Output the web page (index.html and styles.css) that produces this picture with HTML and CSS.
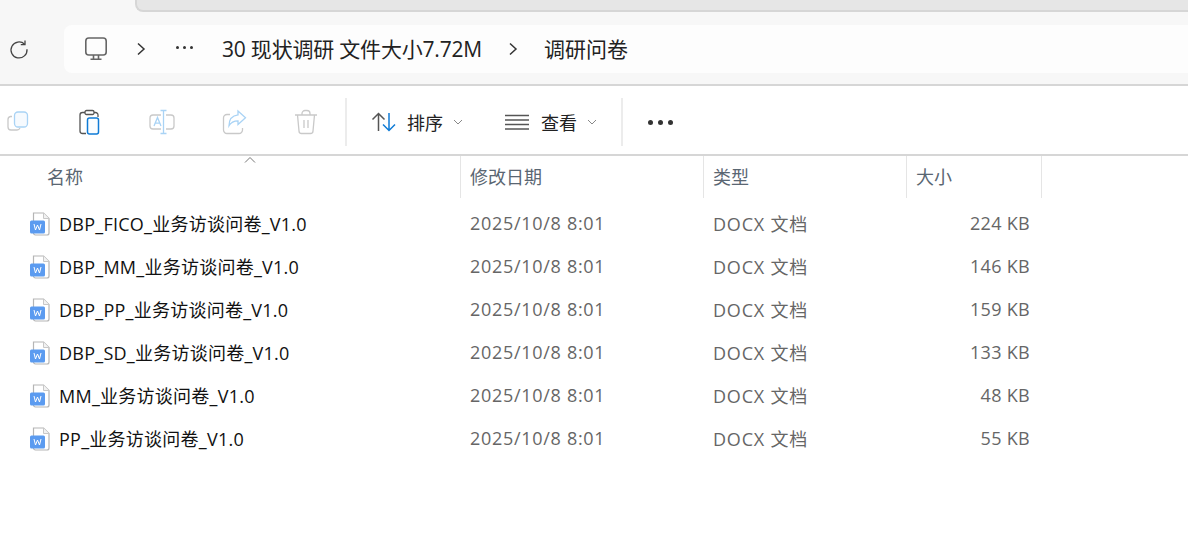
FILE: index.html
```html
<!DOCTYPE html>
<html lang="zh-CN">
<head>
    <meta charset="UTF-8">
    <title>调研问卷</title>
    <link rel="stylesheet" href="styles.css">
</head>
<body>
    <div class="tabstrip">
        <div class="tabstrip-fill"></div>
    </div>

    <div class="navbar">
        <button class="nav-btn">
            <svg width="22" height="22" viewBox="0 0 22 22" fill="none" stroke="#444" stroke-width="1.3"><path d="M16.6 6.2A8 8 0 1 0 19 11.2"/><path d="M17 2.4v4.2h-4.2"/></svg>
        </button>
        <div class="address">
            <svg class="pc-icon" width="24" height="24" viewBox="0 0 24 24" fill="none" stroke="#666" stroke-width="1.6"><rect x="1.8" y="1" width="20.4" height="17" rx="3"/><path d="M9.5 18v4M14.5 18v4M6.5 22.3h11"/></svg>
            <svg class="chev chev-1" width="10" height="14" viewBox="0 0 10 14" fill="none" stroke="#333" stroke-width="1.5"><path d="M2 1.5 8 7l-6 5.5"/></svg>
            <span class="more-dots"><i></i><i></i><i></i></span>
            <span class="crumb crumb-1">30 现状调研 文件大小7.72M</span>
            <svg class="chev chev-2" width="10" height="14" viewBox="0 0 10 14" fill="none" stroke="#333" stroke-width="1.5"><path d="M2 1.5 8 7l-6 5.5"/></svg>
            <span class="crumb crumb-2">调研问卷</span>
        </div>
    </div>

    <div class="toolbar">
        <div class="tool-group">
            <span class="tool">
                <svg width="24" height="24" viewBox="0 0 24 24" fill="none" stroke-width="1.3"><path d="M6 6.500H4.500A3 3 0 0 0 2 9.500v7.500a3 3 0 0 0 3 3h6a3.500 3.500 0 0 0 3-2" stroke="#c9c9c9"/><rect x="8.500" y="2" width="13" height="15" rx="3.500" stroke="#a9d3f5" fill="#f6fafe"/></svg>
            </span>
            <span class="tool">
                <svg width="26" height="26" viewBox="0 0 26 26" fill="none" stroke-width="1.3"><path d="M8 3.500H5.500A2.500 2.500 0 0 0 3 6v16a2.500 2.500 0 0 0 2.500 2.500H9M17 3.500h1.500A2.500 2.500 0 0 1 21 6v2" stroke="#555"/><rect x="8" y="1.500" width="9" height="4" rx="1.500" stroke="#555"/><rect x="10.500" y="9" width="11" height="16" rx="2" stroke="#0f7bd6" stroke-width="1.500" fill="#fafdff"/></svg>
            </span>
            <span class="tool">
                <svg width="26" height="26" viewBox="0 0 26 26" fill="none" stroke-width="1.300"><path d="M12 6H4a3 3 0 0 0-3 3v8a3 3 0 0 0 3 3h8M17 6h5a3 3 0 0 1 3 3v8a3 3 0 0 1-3 3h-5" stroke="#c9c9c9"/><path d="M14.500 2v22M11.500 1.500h6M11.500 24.500h6M5 17l3.500-8.500 3.500 8.500M6.200 14.200h4.600" stroke="#a9d3f5"/></svg>
            </span>
            <span class="tool">
                <svg width="26" height="26" viewBox="0 0 26 26" fill="none" stroke-width="1.300"><path d="M9 5.500H6a3.500 3.500 0 0 0-3.500 3.500v12A3.500 3.500 0 0 0 6 24.500h12a3.500 3.500 0 0 0 3.500-3.500v-2" stroke="#c9c9c9"/><path d="M17 2l7.500 6.800-7.500 6.800v-3.800c-4.200 0-7 1.400-9 5 0-6 3-10.300 9-11z" stroke="#a9d3f5"/></svg>
            </span>
            <span class="tool">
                <svg width="24" height="26" viewBox="0 0 24 26" fill="none" stroke="#c9c9c9" stroke-width="1.300"><path d="M1 6h22M8 6V4.500a3 3 0 0 1 3-3h2a3 3 0 0 1 3 3V6M3.500 6l1.500 16a2.500 2.500 0 0 0 2.500 2.500h9A2.500 2.500 0 0 0 19 22l1.500-16M10 11v8M14 11v8"/></svg>
            </span>
        </div>
        <div class="divider"></div>
        <div class="menu-btn menu-sort">
            <svg width="26" height="22" viewBox="0 0 26 22" fill="none" stroke-width="1.500"><path d="M7.500 20V2.500M1.500 8.500l6-6 6 6" stroke="#555"/><path d="M18 2v17.500M12 13.500l6 6 6-6" stroke="#0f7bd6"/></svg>
            <span>排序</span>
            <svg class="caret" width="10" height="6" viewBox="0 0 10 6" fill="none" stroke="#888" stroke-width="1"><path d="M1 1l4 4 4-4"/></svg>
        </div>
        <div class="menu-btn menu-view">
            <svg width="24" height="16" viewBox="0 0 24 16" fill="none" stroke="#555" stroke-width="1.300"><path d="M0 1.500h24M0 6h24M0 10.500h24M0 15h24"/></svg>
            <span>查看</span>
            <svg class="caret" width="10" height="6" viewBox="0 0 10 6" fill="none" stroke="#888" stroke-width="1"><path d="M1 1l4 4 4-4"/></svg>
        </div>
        <div class="divider"></div>
        <span class="toolbar-more"><i></i><i></i><i></i></span>
    </div>

    <div class="list">
        <div class="list-head">
            <div class="col-head col-name">名称
                <svg class="sort-arrow" width="12" height="6" viewBox="0 0 12 6" fill="none" stroke="#777"><path d="M1 5.500l5-5 5 5"/></svg>
            </div>
            <div class="col-head">修改日期</div>
            <div class="col-head">类型</div>
            <div class="col-head">大小</div>
        </div>

        <div class="row">
            <div class="cell-name"><svg class="doc" width="20" height="24" viewBox="0 0 20 24"><use href="#docx"/></svg>DBP_FICO_业务访谈问卷_V1.0</div>
            <div class="cell cell-date">2025/10/8 8:01</div>
            <div class="cell cell-type">DOCX 文档</div>
            <div class="cell cell-size">224 KB</div>
        </div>
        <div class="row">
            <div class="cell-name"><svg class="doc" width="20" height="24" viewBox="0 0 20 24"><use href="#docx"/></svg>DBP_MM_业务访谈问卷_V1.0</div>
            <div class="cell cell-date">2025/10/8 8:01</div>
            <div class="cell cell-type">DOCX 文档</div>
            <div class="cell cell-size">146 KB</div>
        </div>
        <div class="row">
            <div class="cell-name"><svg class="doc" width="20" height="24" viewBox="0 0 20 24"><use href="#docx"/></svg>DBP_PP_业务访谈问卷_V1.0</div>
            <div class="cell cell-date">2025/10/8 8:01</div>
            <div class="cell cell-type">DOCX 文档</div>
            <div class="cell cell-size">159 KB</div>
        </div>
        <div class="row">
            <div class="cell-name"><svg class="doc" width="20" height="24" viewBox="0 0 20 24"><use href="#docx"/></svg>DBP_SD_业务访谈问卷_V1.0</div>
            <div class="cell cell-date">2025/10/8 8:01</div>
            <div class="cell cell-type">DOCX 文档</div>
            <div class="cell cell-size">133 KB</div>
        </div>
        <div class="row">
            <div class="cell-name"><svg class="doc" width="20" height="24" viewBox="0 0 20 24"><use href="#docx"/></svg>MM_业务访谈问卷_V1.0</div>
            <div class="cell cell-date">2025/10/8 8:01</div>
            <div class="cell cell-type">DOCX 文档</div>
            <div class="cell cell-size">48 KB</div>
        </div>
        <div class="row">
            <div class="cell-name"><svg class="doc" width="20" height="24" viewBox="0 0 20 24"><use href="#docx"/></svg>PP_业务访谈问卷_V1.0</div>
            <div class="cell cell-date">2025/10/8 8:01</div>
            <div class="cell cell-type">DOCX 文档</div>
            <div class="cell cell-size">55 KB</div>
        </div>
    </div>

    <svg class="defs" width="0" height="0">
        <symbol id="docx" viewBox="0 0 20 24">
            <path d="M3.500 1h10L19 6.500V21a2 2 0 0 1-2 2H5.500a2 2 0 0 1-2-2z" fill="#fff" stroke="#b5b5b5" stroke-width="1.200"/>
            <path d="M13.500 1v5.500H19" fill="#f2f2f2" stroke="#c8c8c8"/>
            <rect x="0" y="8.500" width="15" height="13" rx="1.500" fill="#5b9bf0"/>
            <path d="M4 12l1.500 6 2-5 2 5 1.500-6" fill="none" stroke="#fff" stroke-width="1"/>
        </symbol>
    </svg>
</body>
</html>
```

FILE: styles.css
```css
* {
    box-sizing: border-box;
}
html, body {
    height: 100%;
}
body {
    margin: 0;
    overflow: hidden;
    background-color: #fff;
    color: #111;
    font-family: "Open Sans", "Noto Sans CJK SC", sans-serif;
    font-size: 18px;
}
.defs {
    display: block;
}
.tabstrip {
    height: 12px;
    padding-left: 135px;
    background-color: #f7f7f7;
}
.tabstrip-fill {
    height: 12px;
    background-color: #e6e6e6;
    border-bottom: 2px solid #d6d6d6;
    border-left: 2px solid #d6d6d6;
    border-bottom-left-radius: 8px;
}
.navbar {
    height: 74px;
    display: flex;
    align-items: flex-start;
    padding-top: 13px;
    background-color: #f7f7f7;
    border-bottom: 2px solid #d6d6d6;
}
.nav-btn {
    width: 64px;
    height: 48px;
    padding: 0 0 0 8px;
    border: 0;
    background: none;
    display: flex;
    align-items: center;
}
.address {
    flex: 1;
    height: 48px;
    display: flex;
    align-items: center;
    background-color: #fdfdfd;
    border-radius: 8px 0 0 8px;
    padding-left: 20px;
    font-size: 21px;
    color: #222;
}
.crumb {
    margin-top: -3px;
}
.chev-1 {
    margin-left: 28px;
}
.more-dots {
    display: flex;
    gap: 4px;
    margin-left: 30px;
    margin-top: -4px;
}
.more-dots i {
    width: 3px;
    height: 3px;
    border-radius: 50%;
    background-color: #333;
}
.crumb-1 {
    margin-left: 29px;
    letter-spacing: -0.2px;
}
.chev-2 {
    margin-left: 26px;
}
.crumb-2 {
    margin-left: 26px;
}
.toolbar {
    height: 70px;
    display: flex;
    align-items: center;
    padding-top: 4px;
    border-bottom: 2px solid #d6d6d6;
}
.tool-group {
    display: flex;
    width: 345px;
    padding-left: 5px;
    gap: 46px;
}
.tool {
    width: 26px;
    height: 26px;
    display: flex;
    align-items: center;
    justify-content: center;
}
.divider {
    width: 2px;
    height: 48px;
    background-color: #ececec;
}
.menu-btn {
    display: flex;
    align-items: center;
    font-size: 18px;
    color: #222;
}
.menu-btn span {
    margin-left: 10px;
}
.menu-sort {
    padding-left: 24px;
}
.menu-view {
    padding-left: 42px;
    padding-right: 24px;
}
.menu-view span {
    margin-left: 12px;
}
.caret {
    margin-left: 10px;
}
.toolbar-more {
    display: flex;
    gap: 5px;
    margin-left: 25px;
}
.toolbar-more i {
    width: 5px;
    height: 5px;
    border-radius: 50%;
    background-color: #333;
}
.list-head {
    height: 40px;
    display: grid;
    grid-template-columns: 461px 243px 203px 135px;
}
.col-head {
    position: relative;
    padding-left: 9px;
    line-height: 42px;
    border-right: 1px solid #e5e5e5;
    color: #5a6672;
    font-size: 18px;
}
.col-name {
    padding-left: 47px;
}
.sort-arrow {
    position: absolute;
    left: 244px;
    top: 1px;
}
.row {
    height: 43px;
    display: grid;
    grid-template-columns: 461px 243px 203px 123px;
    align-items: center;
    color: #666;
}
.list-head + .row {
    margin-top: 5px;
}
.cell-name {
    display: flex;
    align-items: center;
    padding-left: 30px;
    color: #111;
    letter-spacing: 0.25px;
}
.doc {
    margin-top: 2px;
    margin-right: 9px;
    flex: none;
}
.cell {
    padding-left: 9px;
}
.cell-date {
    letter-spacing: 0.7px;
}
.cell-type {
    letter-spacing: 0.8px;
}
.cell-size {
    text-align: right;
    letter-spacing: 0.3px;
}
```
